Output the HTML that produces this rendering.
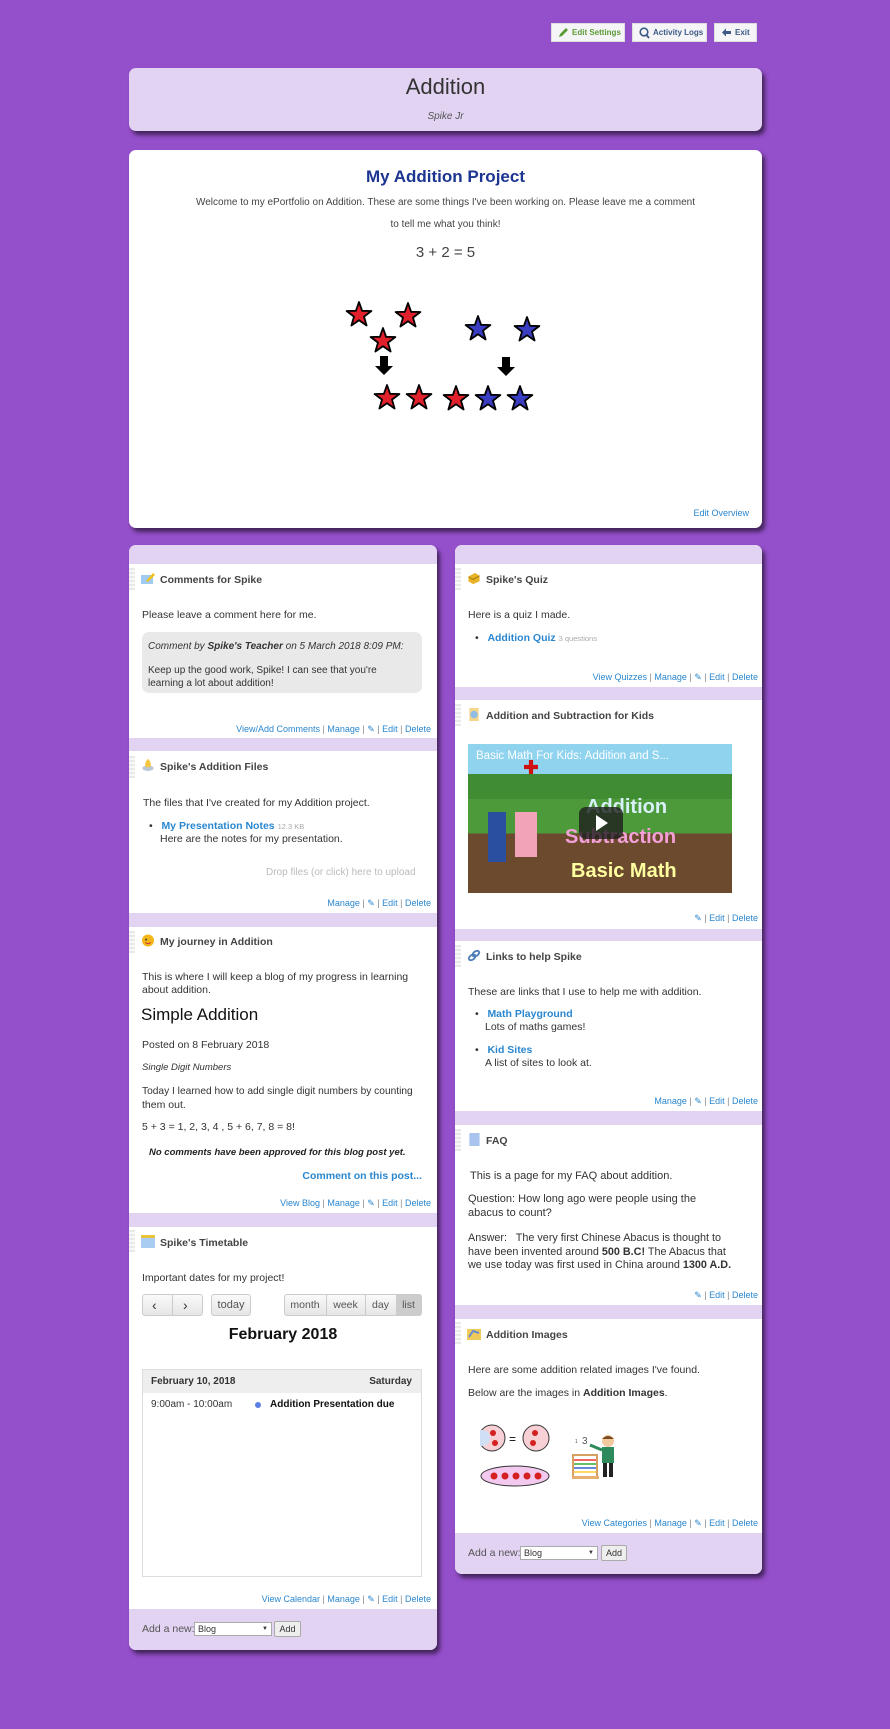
<!DOCTYPE html>
<html><head><meta charset="utf-8"><style>
*{margin:0;padding:0;box-sizing:border-box}
body{width:890px;height:1729px;background:#944fca;font-family:"Liberation Sans",sans-serif;font-size:10.5px;color:#333;position:relative;overflow:hidden}
.a{position:absolute;white-space:nowrap}
.t{position:absolute;white-space:nowrap;line-height:14px;height:14px}
.card{position:absolute;border-radius:7px;box-shadow:3px 4px 4px rgba(0,0,0,.55)}
.lav{background:#e3d3f3}
.wh{background:#fff}
.btn{position:absolute;top:23px;height:19px;background:#f5f5f7;border:1px solid #ddd;font-size:8px;font-weight:bold;line-height:17px;padding-left:20px;color:#3b5a85;white-space:nowrap;overflow:hidden}
.ft{position:absolute;white-space:nowrap;font-size:9px;color:#2a87cf;text-align:right;line-height:12px}
.ft span{color:#888}
.hd{position:absolute;font-weight:bold;font-size:10.5px;color:#444;line-height:14px;white-space:nowrap}
.grip{position:absolute;width:6px;height:22px;background:repeating-linear-gradient(#e8e8e8 0 2px,#f8f8f8 2px 4px)}
.band{position:absolute;background:#e3d3f3}
.lnk{color:#2a87cf;font-weight:bold}
.ic{position:absolute;width:14px;height:13px}
</style></head><body>

<div class="btn" style="left:551px;width:74px;color:#5a9a36">Edit Settings<svg class="a" style="left:6px;top:3px" width="11" height="11" viewBox="0 0 11 11"><path d="M1 10 L2 7 L8 1 L10 3 L4 9 Z" fill="#5a9a36"/></svg></div>
<div class="btn" style="left:632px;width:75px">Activity Logs<svg class="a" style="left:6px;top:3px" width="11" height="12" viewBox="0 0 11 12"><circle cx="5" cy="5" r="3.8" fill="none" stroke="#3b5a85" stroke-width="1.6"/><path d="M7.5 8 L10 11" stroke="#3b5a85" stroke-width="1.8"/></svg></div>
<div class="btn" style="left:714px;width:43px">Exit<svg class="a" style="left:6px;top:3px" width="11" height="11" viewBox="0 0 11 11"><path d="M1 5.5 L5 1.5 L5 4 L10 4 L10 7 L5 7 L5 9.5 Z" fill="#3b5a85"/></svg></div>

<div class="card lav" style="left:129px;top:68px;width:633px;height:63px"></div>
<div class="a" style="left:129px;width:633px;top:74px;text-align:center;font-size:22px;color:#333;line-height:26px">Addition</div>
<div class="a" style="left:129px;width:633px;top:111px;text-align:center;font-size:10px;font-style:italic;color:#555">Spike Jr</div>

<div class="card wh" style="left:129px;top:150px;width:633px;height:378px"></div>
<div class="a" style="left:129px;width:633px;top:167px;text-align:center;font-size:17px;font-weight:bold;color:#1b3590">My Addition Project</div>
<div class="a" style="left:129px;width:633px;top:197px;text-align:center;font-size:10px;color:#444">Welcome to my ePortfolio on Addition. These are some things I've been working on. Please leave me a comment</div>
<div class="a" style="left:129px;width:633px;top:219px;text-align:center;font-size:10px;color:#444">to tell me what you think!</div>
<div class="a" style="left:129px;width:633px;top:244px;text-align:center;font-size:15px;color:#444">3 + 2 = 5</div>
<svg class="a" style="left:129px;top:150px" width="633" height="378">
<defs><polygon id="st" points="0,-13 3.1,-4.2 12.4,-4 5,1.6 7.6,10.5 0,5.2 -7.6,10.5 -5,1.6 -12.4,-4 -3.1,-4.2" stroke="#000" stroke-width="1.8" stroke-linejoin="round"/>
<path id="ar" d="M-4,-10 H4 V0 H9 L0,9 L-9,0 H-4 Z" fill="#000"/></defs>
<g fill="#e0202a"><use href="#st" x="230" y="165"/><use href="#st" x="279" y="166"/><use href="#st" x="254" y="191"/><use href="#st" x="258" y="248"/><use href="#st" x="290" y="248"/><use href="#st" x="327" y="249"/></g>
<g fill="#3a3cc2"><use href="#st" x="349" y="179"/><use href="#st" x="398" y="180"/><use href="#st" x="359" y="249"/><use href="#st" x="391" y="249"/></g>
<use href="#ar" x="255" y="216"/><use href="#ar" x="377" y="217"/>
</svg>
<div class="ft" style="right:141px;top:507px">Edit Overview</div>

<!-- LEFT COLUMN -->
<div class="card wh" style="left:129px;top:545px;width:308px;height:1105px;overflow:hidden"></div>
<div class="band" style="left:129px;top:545px;width:308px;height:19px;border-radius:7px 7px 0 0"></div>
<div class="grip" style="left:129px;top:568px"></div>
<svg class="ic" style="left:141px;top:572px" viewBox="0 0 14 13"><rect x="0" y="3" width="12" height="9" fill="#9ecbef"/><path d="M5 9 L12 1 L14 3 L7 10 Z" fill="#f2c21a"/></svg>
<div class="hd" style="left:160px;top:573px">Comments for Spike</div>
<div class="t" style="left:142px;top:608px">Please leave a comment here for me.</div>
<div class="a" style="left:142px;top:632px;width:280px;height:61px;background:#e9e9e9;border-radius:7px"></div>
<div class="t" style="left:148px;top:640px;font-style:italic;font-size:10px">Comment by <b>Spike's Teacher</b> on 5 March 2018 8:09 PM:</div>
<div class="t" style="left:148px;top:664px;font-size:10px">Keep up the good work, Spike! I can see that you're</div>
<div class="t" style="left:148px;top:677px;font-size:10px">learning a lot about addition!</div>
<div class="ft" style="right:459px;top:723px">View/Add Comments <span>|</span> Manage <span>|</span> ✎ <span>|</span> Edit <span>|</span> Delete</div>
<div class="band" style="left:129px;top:738px;width:308px;height:13px"></div>

<div class="grip" style="left:129px;top:756px"></div>
<svg class="ic" style="left:141px;top:758px" viewBox="0 0 14 14"><ellipse cx="7" cy="11" rx="6" ry="3" fill="#b9c8d8"/><path d="M7 1 C10 4 11 7 9 10 H5 C3 7 4 4 7 1Z" fill="#f5c640"/></svg>
<div class="hd" style="left:160px;top:760px">Spike's Addition Files</div>
<div class="t" style="left:143px;top:796px">The files that I've created for my Addition project.</div>
<div class="t" style="left:149px;top:819px">•&nbsp;&nbsp;&nbsp;<span class="lnk">My Presentation Notes</span> <span style="font-size:7.5px;color:#aaa">12.3 KB</span></div>
<div class="t" style="left:160px;top:832px">Here are the notes for my presentation.</div>
<div class="t" style="left:266px;top:866px;color:#bbb;font-size:10px">Drop files (or click) here to upload</div>
<div class="ft" style="right:459px;top:897px">Manage <span>|</span> ✎ <span>|</span> Edit <span>|</span> Delete</div>
<div class="band" style="left:129px;top:913px;width:308px;height:14px"></div>

<div class="grip" style="left:129px;top:931px"></div>
<svg class="ic" style="left:141px;top:934px" viewBox="0 0 14 14"><circle cx="7" cy="7" r="6.5" fill="#f3b71a"/><circle cx="5" cy="6" r="1" fill="#333"/><path d="M4 9 Q7 12 10 9" stroke="#c33" fill="none"/></svg>
<div class="hd" style="left:160px;top:935px">My journey in Addition</div>
<div class="t" style="left:142px;top:970px">This is where I will keep a blog of my progress in learning</div>
<div class="t" style="left:142px;top:983px">about addition.</div>
<div class="a" style="left:141px;top:1005px;font-size:17px;color:#111">Simple Addition</div>
<div class="t" style="left:142px;top:1038px">Posted on 8 February 2018</div>
<div class="t" style="left:142px;top:1061px;font-style:italic;font-size:9.5px">Single Digit Numbers</div>
<div class="t" style="left:142px;top:1085px;font-size:10.2px">Today I learned how to add single digit numbers by counting</div>
<div class="t" style="left:142px;top:1098px">them out.</div>
<div class="t" style="left:142px;top:1120px">5 + 3 = 1, 2, 3, 4 , 5 + 6, 7, 8 = 8!</div>
<div class="t" style="left:149px;top:1146px;font-style:italic;font-weight:bold;font-size:9.5px;color:#222">No comments have been approved for this blog post yet.</div>
<div class="t" style="right:468px;top:1169px;color:#2a87cf;font-weight:bold">Comment on this post...</div>
<div class="ft" style="right:459px;top:1197px">View Blog <span>|</span> Manage <span>|</span> ✎ <span>|</span> Edit <span>|</span> Delete</div>
<div class="band" style="left:129px;top:1213px;width:308px;height:14px"></div>

<div class="grip" style="left:129px;top:1230px"></div>
<svg class="ic" style="left:141px;top:1235px" viewBox="0 0 14 13"><rect x="0" y="0" width="14" height="13" fill="#a9cdf2"/><rect x="0" y="0" width="14" height="3" fill="#e8c43a"/></svg>
<div class="hd" style="left:160px;top:1236px">Spike's Timetable</div>
<div class="t" style="left:142px;top:1271px">Important dates for my project!</div>
<div class="a" style="left:142px;top:1294px;width:61px;height:22px;border:1px solid #ccc;border-radius:3px;background:linear-gradient(#fafafa,#e6e6e6)"></div>
<div class="a" style="left:172px;top:1295px;width:1px;height:20px;background:#ccc"></div>
<div class="a" style="left:152px;top:1296px;font-size:14px;line-height:18px;color:#333">&lsaquo;</div>
<div class="a" style="left:183px;top:1296px;font-size:14px;line-height:18px;color:#333">&rsaquo;</div>
<div class="a" style="left:211px;top:1294px;width:40px;height:22px;border:1px solid #ccc;border-radius:3px;background:linear-gradient(#fafafa,#e6e6e6);text-align:center;line-height:20px;font-size:11px;color:#555">today</div>
<div class="a" style="left:284px;top:1294px;width:138px;height:22px;border:1px solid #ccc;border-radius:3px;background:linear-gradient(#fafafa,#e6e6e6)"></div>
<div class="a" style="left:284px;top:1295px;width:42px;text-align:center;line-height:20px;color:#555">month</div>
<div class="a" style="left:326px;top:1295px;width:1px;height:20px;background:#ccc"></div>
<div class="a" style="left:326px;top:1295px;width:39px;text-align:center;line-height:20px;color:#555">week</div>
<div class="a" style="left:365px;top:1295px;width:1px;height:20px;background:#ccc"></div>
<div class="a" style="left:365px;top:1295px;width:31px;text-align:center;line-height:20px;color:#555">day</div>
<div class="a" style="left:396px;top:1295px;width:25px;height:20px;background:#ccc;text-align:center;line-height:20px;color:#555">list</div>
<div class="a" style="left:129px;width:308px;top:1326px;text-align:center;font-size:16px;font-weight:bold;color:#111">February 2018</div>
<div class="a" style="left:142px;top:1369px;width:280px;height:208px;border:1px solid #ddd"></div>
<div class="a" style="left:143px;top:1370px;width:278px;height:23px;background:#eee"></div>
<div class="t" style="left:151px;top:1375px;font-weight:bold;font-size:10px">February 10, 2018</div>
<div class="t" style="right:478px;top:1375px;font-weight:bold;font-size:10px">Saturday</div>
<div class="t" style="left:151px;top:1398px;font-size:10px">9:00am - 10:00am</div>
<div class="a" style="left:255px;top:1402px;width:6px;height:6px;border-radius:50%;background:#5b7ee5"></div>
<div class="t" style="left:270px;top:1398px;font-weight:bold;font-size:10px;color:#111">Addition Presentation due</div>
<div class="ft" style="right:459px;top:1593px">View Calendar <span>|</span> Manage <span>|</span> ✎ <span>|</span> Edit <span>|</span> Delete</div>
<div class="band" style="left:129px;top:1609px;width:308px;height:41px;border-radius:0 0 7px 7px"></div>
<div class="t" style="left:142px;top:1622px;color:#555;font-size:10.5px">Add a new:</div>
<div class="a" style="left:194px;top:1622px;width:78px;height:14px;border:1px solid #aaa;background:#fff;font-size:9px;line-height:12px;padding-left:3px">Blog<span style="position:absolute;right:3px;font-size:6px">▼</span></div>
<div class="a" style="left:274px;top:1621px;width:27px;height:16px;border:1px solid #aaa;background:#eee;font-size:9px;line-height:14px;text-align:center;border-radius:2px">Add</div>

<!-- RIGHT COLUMN -->
<div class="card wh" style="left:455px;top:545px;width:307px;height:1029px"></div>
<div class="band" style="left:455px;top:545px;width:307px;height:19px;border-radius:7px 7px 0 0"></div>
<div class="grip" style="left:455px;top:568px"></div>
<svg class="ic" style="left:467px;top:572px" viewBox="0 0 14 14"><path d="M1 5 L8 1 L13 4 L13 10 L6 13 L1 10Z" fill="#e8b325"/><path d="M1 5 L6 8 L13 4" stroke="#a77a10" fill="none"/></svg>
<div class="hd" style="left:486px;top:573px">Spike's Quiz</div>
<div class="t" style="left:468px;top:608px">Here is a quiz I made.</div>
<div class="t" style="left:475px;top:631px">•&nbsp;&nbsp;&nbsp;<span class="lnk">Addition Quiz</span> <span style="font-size:7.5px;color:#aaa">3 questions</span></div>
<div class="ft" style="right:132px;top:671px">View Quizzes <span>|</span> Manage <span>|</span> ✎ <span>|</span> Edit <span>|</span> Delete</div>
<div class="band" style="left:455px;top:687px;width:307px;height:13px"></div>

<div class="grip" style="left:455px;top:704px"></div>
<svg class="ic" style="left:467px;top:708px" viewBox="0 0 14 14"><rect x="2" y="0" width="10" height="14" fill="#f3d68a"/><circle cx="7" cy="7" r="4" fill="#8fbde6"/></svg>
<div class="hd" style="left:486px;top:709px">Addition and Subtraction for Kids</div>
<div class="a" style="left:468px;top:744px;width:264px;height:149px;overflow:hidden;background:linear-gradient(#8fd3ef 0 28%,#4c9a3a 28% 60%,#6b4a2e 60%)">
<div class="a" style="left:0;top:30px;width:264px;height:25px;background:#3f8c32"></div>
<div class="a" style="left:8px;top:6px;color:#fff;font-size:11.5px">Basic Math For Kids: Addition and S...</div>
<div class="a" style="left:56px;top:16px;width:14px;height:14px;background:#d01010;clip-path:polygon(35% 0,65% 0,65% 35%,100% 35%,100% 65%,65% 65%,65% 100%,35% 100%,35% 65%,0 65%,0 35%,35% 35%)"></div>
<div class="a" style="left:20px;top:68px;width:18px;height:50px;background:#2a4ea0"></div>
<div class="a" style="left:47px;top:68px;width:22px;height:45px;background:#f3a3b8"></div>
<div class="a" style="left:118px;top:52px;font-size:20px;font-weight:bold;color:#d8f0f8">Addition</div>
<div class="a" style="left:97px;top:82px;font-size:20px;font-weight:bold;color:#f4a0d8">Subtraction</div>
<div class="a" style="left:103px;top:116px;font-size:20px;font-weight:bold;color:#ffffa0">Basic Math</div>
<div class="a" style="left:111px;top:63px;width:44px;height:32px;background:rgba(30,30,30,.8);border-radius:7px"></div>
<div class="a" style="left:128px;top:71px;width:0;height:0;border-left:12px solid #fff;border-top:8px solid transparent;border-bottom:8px solid transparent"></div>
</div>
<div class="ft" style="right:132px;top:912px">✎ <span>|</span> Edit <span>|</span> Delete</div>
<div class="band" style="left:455px;top:929px;width:307px;height:12px"></div>

<div class="grip" style="left:455px;top:945px"></div>
<svg class="ic" style="left:467px;top:949px" viewBox="0 0 14 14"><g stroke="#4f7fb8" stroke-width="2" fill="none"><ellipse cx="5" cy="9" rx="4" ry="2.5" transform="rotate(-35 5 9)"/><ellipse cx="9" cy="5" rx="4" ry="2.5" transform="rotate(-35 9 5)"/></g></svg>
<div class="hd" style="left:486px;top:950px">Links to help Spike</div>
<div class="t" style="left:468px;top:985px">These are links that I use to help me with addition.</div>
<div class="t" style="left:475px;top:1007px">•&nbsp;&nbsp;&nbsp;<span class="lnk">Math Playground</span></div>
<div class="t" style="left:485px;top:1020px">Lots of maths games!</div>
<div class="t" style="left:475px;top:1043px">•&nbsp;&nbsp;&nbsp;<span class="lnk">Kid Sites</span></div>
<div class="t" style="left:485px;top:1056px">A list of sites to look at.</div>
<div class="ft" style="right:132px;top:1095px">Manage <span>|</span> ✎ <span>|</span> Edit <span>|</span> Delete</div>
<div class="band" style="left:455px;top:1111px;width:307px;height:14px"></div>

<div class="grip" style="left:455px;top:1129px"></div>
<svg class="ic" style="left:467px;top:1133px" viewBox="0 0 14 14"><rect x="2" y="0" width="11" height="14" fill="#a8c4ee"/></svg>
<div class="hd" style="left:486px;top:1134px">FAQ</div>
<div class="t" style="left:470px;top:1169px;font-size:11px">This is a page for my FAQ about addition.</div>
<div class="t" style="left:468px;top:1192px;font-size:11px">Question: How long ago were people using the</div>
<div class="t" style="left:468px;top:1206px;font-size:11px">abacus to count?</div>
<div class="t" style="left:468px;top:1231px;font-size:10.8px">Answer:&nbsp;&nbsp; The very first Chinese Abacus is thought to</div>
<div class="t" style="left:468px;top:1245px;font-size:10.8px">have been invented around <b>500 B.C!</b> The Abacus that</div>
<div class="t" style="left:468px;top:1258px;font-size:10.8px">we use today was first used in China around <b>1300 A.D.</b></div>
<div class="ft" style="right:132px;top:1289px">✎ <span>|</span> Edit <span>|</span> Delete</div>
<div class="band" style="left:455px;top:1305px;width:307px;height:14px"></div>

<div class="grip" style="left:455px;top:1322px"></div>
<svg class="ic" style="left:467px;top:1327px" viewBox="0 0 14 13"><rect x="0" y="2" width="14" height="11" fill="#f0cb5a"/><path d="M2 10 L6 4 L12 6" stroke="#6a8fd0" stroke-width="2" fill="none"/></svg>
<div class="hd" style="left:486px;top:1328px">Addition Images</div>
<div class="t" style="left:468px;top:1363px">Here are some addition related images I've found.</div>
<div class="t" style="left:468px;top:1386px">Below are the images in <b>Addition Images</b>.</div>
<svg class="a" style="left:480px;top:1424px" width="70" height="64" viewBox="0 0 70 64">
<circle cx="12" cy="14" r="13" fill="#f7d0d6" stroke="#333"/><circle cx="2" cy="14" r="8" fill="#cfe0f5"/>
<text x="29" y="19" font-size="12" font-family="Liberation Sans">=</text>
<circle cx="56" cy="14" r="13" fill="#f7d0d6" stroke="#333"/>
<circle cx="13" cy="9" r="3" fill="#d42020"/><circle cx="15" cy="19" r="3" fill="#d42020"/><circle cx="55" cy="9" r="3" fill="#d42020"/><circle cx="53" cy="19" r="3" fill="#d42020"/>
<ellipse cx="35" cy="52" rx="34" ry="10" fill="#f3c9ef" stroke="#333"/>
<g fill="#d42020"><circle cx="14" cy="52" r="3.5"/><circle cx="25" cy="52" r="3.5"/><circle cx="36" cy="52" r="3.5"/><circle cx="47" cy="52" r="3.5"/><circle cx="58" cy="52" r="3.5"/></g>
</svg>
<svg class="a" style="left:572px;top:1433px" width="48" height="48" viewBox="0 0 48 48">
<text x="3" y="10" font-size="5" fill="#555" font-family="Liberation Sans">1</text><text x="10" y="11" font-size="10" fill="#555" font-family="Liberation Sans">3</text>
<rect x="1" y="22" width="24" height="22" fill="none" stroke="#d8a060" stroke-width="2"/>
<g stroke-width="1.5"><path d="M2 27H24" stroke="#e33"/><path d="M2 31H24" stroke="#3a3"/><path d="M2 35H24" stroke="#36c"/><path d="M2 39H24" stroke="#fc3"/></g>
<rect x="0" y="43" width="27" height="3" fill="#e8b070"/>
<circle cx="36" cy="8" r="6" fill="#f3c9a0"/><path d="M30 6 Q36 0 42 6" fill="#7a4a20"/>
<rect x="30" y="14" width="12" height="16" fill="#2e8a5a"/><path d="M30 17 L18 12" stroke="#2e8a5a" stroke-width="3"/>
<rect x="31" y="30" width="4" height="14" fill="#222"/><rect x="37" y="30" width="4" height="14" fill="#222"/>
</svg>
<div class="ft" style="right:132px;top:1517px">View Categories <span>|</span> Manage <span>|</span> ✎ <span>|</span> Edit <span>|</span> Delete</div>
<div class="band" style="left:455px;top:1533px;width:307px;height:41px;border-radius:0 0 7px 7px"></div>
<div class="t" style="left:468px;top:1546px;color:#555;font-size:10.5px">Add a new:</div>
<div class="a" style="left:520px;top:1546px;width:78px;height:14px;border:1px solid #aaa;background:#fff;font-size:9px;line-height:12px;padding-left:3px">Blog<span style="position:absolute;right:3px;font-size:6px">▼</span></div>
<div class="a" style="left:601px;top:1545px;width:26px;height:16px;border:1px solid #aaa;background:#eee;font-size:9px;line-height:14px;text-align:center;border-radius:2px">Add</div>

</body></html>
